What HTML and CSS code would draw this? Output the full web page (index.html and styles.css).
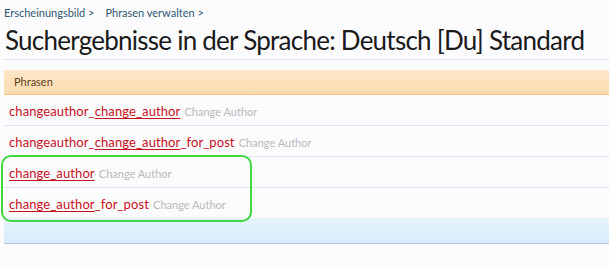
FILE: index.html
```html
<!DOCTYPE html>
<html lang="de">
<head>
<meta charset="utf-8">
<title>Suchergebnisse</title>
<link rel="stylesheet" href="styles.css">
</head>
<body>
<div class="page">
  <nav class="crumbs">
    <span class="crumb">Erscheinungsbild &gt;</span>
    <span class="crumb">Phrasen verwalten &gt;</span>
  </nav>
  <h1 class="title">Suchergebnisse in der Sprache: Deutsch [Du] Standard</h1>
  <div class="list">
    <div class="head">Phrasen</div>
    <div class="rows">
      <div class="row"><span class="name">changeauthor_<u>change_author</u></span> <span class="desc">Change Author</span></div>
      <div class="row"><span class="name">changeauthor_<u>change_author</u>_for_post</span> <span class="desc">Change Author</span></div>
      <div class="row"><span class="name"><u>change_author</u></span> <span class="desc">Change Author</span></div>
      <div class="row last"><span class="name"><u>change_author</u>_for_post</span> <span class="desc">Change Author</span></div>
      <div class="mark"></div>
    </div>
    <div class="foot"></div>
  </div>
</div>
</body>
</html>
```
FILE: styles.css
```css
html, body {
  margin: 0;
  padding: 0;
  background: #fcfcff;
}
body {
  font-family: Lato, "Open Sans", sans-serif;
  overflow: hidden;
}
.page {
  padding: 5px 0 0 4px;
}
.crumbs {
  display: flex;
  gap: 11px;
  font-size: 11px;
  line-height: 16px;
  color: #2f5772;
}
.title {
  margin: 0;
  font-weight: normal;
  font-size: 26px;
  letter-spacing: -0.75px;
  white-space: nowrap;
  line-height: 30px;
  padding: 4px 0 4px 1px;
  color: #1a1a1a;
  border-bottom: 1px solid #dce8f0;
}
.list {
  margin-top: 10px;
}
.head {
  height: 24px;
  line-height: 24px;
  padding-left: 10px;
  font-size: 11px;
  color: #5e3d14;
  background: linear-gradient(#fde6c8, #fbdcb0);
  border-bottom: 1px solid #f7c37f;
}
.rows {
  position: relative;
}
.row {
  height: 30px;
  line-height: 30px;
  padding-left: 5px;
  border-bottom: 1px solid #dbeaf2;
  white-space: nowrap;
}
.row.last {
  border-bottom: none;
}
.name {
  font-size: 13px;
  letter-spacing: 0.1px;
  color: #c8101c;
}
.name u {
  text-decoration-thickness: 1px;
  text-underline-offset: 2px;
}
.desc {
  font-size: 11px;
  color: #b9b9b9;
}
.foot {
  height: 25px;
  background: linear-gradient(#e5f3fd, #d9ecfa);
  border-bottom: 1px solid #a9c9e0;
}
.mark {
  position: absolute;
  left: -3px;
  top: 60px;
  width: 247px;
  height: 63px;
  border: 2px solid #3fd640;
  border-radius: 10px;
  pointer-events: none;
}
```
